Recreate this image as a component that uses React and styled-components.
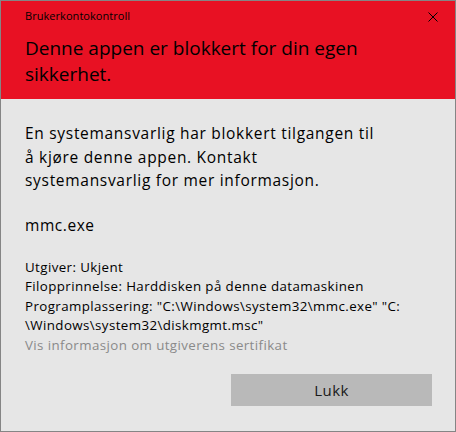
import React from "react";
import styled, { createGlobalStyle } from "styled-components";

const Global = createGlobalStyle`
  html, body { margin: 0; padding: 0; background: #e6e6e6; }
  #root { font-family: "Open Sans", "Noto Sans", sans-serif; }
`;

const Window = styled.div`
  box-sizing: border-box;
  width: 456px;
  height: 432px;
  border: 1px solid #858585;
  background: #e6e6e6;
  display: flex;
  flex-direction: column;
`;

const Header = styled.header`
  background: #e81123;
  padding: 7px 17px 12px 24px;
  display: flex;
  flex-direction: column;
  gap: 11px;
`;

const TitleRow = styled.div`
  display: flex;
  justify-content: space-between;
  align-items: flex-start;
`;

const Title = styled.span`
  font-size: 11px;
  line-height: 16px;
  letter-spacing: 0.05px;
  color: #000;
`;

const Close = styled.button`
  border: none;
  background: none;
  padding: 0;
  margin-top: 4px;
  width: 10px;
  height: 10px;
  display: flex;
`;

const Heading = styled.h1`
  margin: 0;
  font-size: 19px;
  font-weight: normal;
  line-height: 26px;
  color: #000;
`;

const Content = styled.main`
  flex: 1;
  padding: 23px 23px 0 24px;
  display: flex;
  flex-direction: column;
`;

const Message = styled.p`
  margin: 0;
  font-size: 15.5px;
  line-height: 23.5px;
  letter-spacing: 0.7px;
  color: #000;
`;

const FileName = styled.p`
  margin: 21px 0 0;
  font-size: 15.5px;
  line-height: 23.5px;
  letter-spacing: 0.55px;
  color: #000;
`;

const Details = styled.div`
  margin-top: 21px;
  display: flex;
  flex-direction: column;
`;

const Detail = styled.div`
  font-size: 13.33px;
  line-height: 19.4px;
  letter-spacing: 0.4px;
  color: ${(p) => (p.$muted ? "#8a8a8a" : "#000")};
`;

const Footer = styled.footer`
  display: flex;
  justify-content: flex-end;
  margin-top: 19px;
`;

const Button = styled.button`
  width: 201px;
  height: 32px;
  border: none;
  background: #b9b9b9;
  font-family: inherit;
  font-size: 15px;
  letter-spacing: 0.4px;
  color: #1a1a1a;
  padding: 0;
`;

const CloseIcon = () => (
  <svg width="10" height="10" viewBox="0 0 10 10">
    <path d="M0.5 0.5 L9.5 9.5 M9.5 0.5 L0.5 9.5" stroke="#000" strokeWidth="1" fill="none" />
  </svg>
);

export default function App() {
  return (
    <>
      <Global />
      <Window>
        <Header>
          <TitleRow>
            <Title>Brukerkontokontroll</Title>
            <Close aria-label="Lukk">
              <CloseIcon />
            </Close>
          </TitleRow>
          <Heading>
            Denne appen er blokkert for din egen
            <br />
            sikkerhet.
          </Heading>
        </Header>
        <Content>
          <Message>
            En systemansvarlig har blokkert tilgangen til
            <br />
            å kjøre denne appen. Kontakt
            <br />
            systemansvarlig for mer informasjon.
          </Message>
          <FileName>mmc.exe</FileName>
          <Details>
            <Detail>Utgiver: Ukjent</Detail>
            <Detail>Filopprinnelse: Harddisken på denne datamaskinen</Detail>
            <Detail>
              Programplassering: "C:\Windows\system32\mmc.exe" "C:
              <br />
              \Windows\system32\diskmgmt.msc"
            </Detail>
            <Detail $muted>Vis informasjon om utgiverens sertifikat</Detail>
          </Details>
          <Footer>
            <Button>Lukk</Button>
          </Footer>
        </Content>
      </Window>
    </>
  );
}
